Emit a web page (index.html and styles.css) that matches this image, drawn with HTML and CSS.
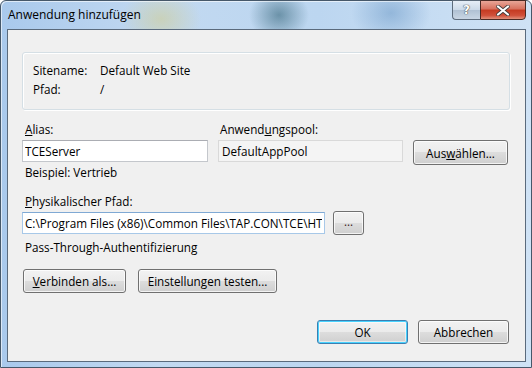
FILE: index.html
```html
<!DOCTYPE html>
<html lang="de">
<head>
  <meta charset="UTF-8">
  <link rel="stylesheet" href="styles.css">
  <title>Anwendung hinzufügen</title>
</head>
<body>
<div class="window">
  <div class="titlebar">
    <span class="title">Anwendung hinzufügen</span>
    <div class="caption-buttons">
      <div class="cap-help">?</div>
      <div class="cap-close">
        <svg width="14" height="11" viewBox="0 0 14 11"><path d="M2 1.5 L12 9.5 M12 1.5 L2 9.5" stroke="#3a3a3a" stroke-width="3.6" stroke-linecap="round"/><path d="M2 1.5 L12 9.5 M12 1.5 L2 9.5" stroke="#ffffff" stroke-width="2.2" stroke-linecap="round"/></svg>
      </div>
    </div>
  </div>
  <div class="client">
    <div class="groupbox">
      <div class="info-row"><span class="info-key">Sitename:</span><span>Default Web Site</span></div>
      <div class="info-row"><span class="info-key">Pfad:</span><span>/</span></div>
    </div>

    <div class="pool-grid">
      <label class="lbl lbl-alias"><u>A</u>lias:</label>
      <label class="lbl lbl-pool">Anwend<u>u</u>ngspool:</label>
      <input class="textbox alias" type="text" value="TCEServer">
      <div class="textbox readonly">DefaultAppPool</div>
      <button class="btn btn-select">Aus<u>w</u>ählen...</button>
    </div>
    <div class="hint">Beispiel: Vertrieb</div>

    <label class="lbl lbl-path"><u>P</u>hysikalischer Pfad:</label>
    <div class="path-row">
      <input class="textbox path" type="text" value="C:\Program Files (x86)\Common Files\TAP.CON\TCE\HTML">
      <button class="btn btn-browse">...</button>
    </div>
    <div class="hint auth">Pass-Through-Authentifizierung</div>

    <div class="action-row">
      <button class="btn btn-connect"><u>V</u>erbinden als...</button>
      <button class="btn btn-test">Einstellun<u>g</u>en testen...</button>
    </div>

    <div class="dialog-buttons">
      <button class="btn btn-ok">OK</button>
      <button class="btn btn-cancel">Abbrechen</button>
    </div>
  </div>
</div>
</body>
</html>
```

FILE: styles.css
```css
* {
  margin: 0;
  padding: 0;
  box-sizing: border-box;
}
body {
  width: 532px;
  height: 368px;
  overflow: hidden;
  background: #ffffff;
  font-family: "Open Sans", "Noto Sans", Arial, sans-serif;
  font-size: 11.7px;
  color: #000000;
}
.window {
  width: 532px;
  height: 368px;
  border: 1px solid #46586a;
  border-radius: 6px 6px 0 0;
  padding: 0 5px 5px 6px;
  background:
    radial-gradient(ellipse 40px 30px at 160px 18px, rgba(210, 200, 120, 0.45), transparent),
    radial-gradient(ellipse 30px 26px at 278px 14px, rgba(40, 90, 110, 0.55), transparent),
    radial-gradient(ellipse 40px 30px at 390px 12px, rgba(90, 140, 190, 0.45), transparent),
    linear-gradient(to right, #a9c9ec, #c2d9f1 30%, #bcd6f0 60%, #cfe2f5);
  box-shadow: inset 1px 1px 0 rgba(255, 255, 255, 0.6);
}
.titlebar {
  height: 28px;
  display: flex;
  align-items: flex-start;
  justify-content: space-between;
}
.title {
  font-size: 12px;
  margin-top: 5px;
  margin-left: 1px;
  color: #000000;
}
.caption-buttons {
  display: flex;
  margin-top: -1px;
}
.cap-help {
  width: 28px;
  height: 20px;
  border: 1px solid #5d6c7c;
  border-right: none;
  border-radius: 0 0 0 4px;
  background: linear-gradient(to bottom, #e6eef7, #cbd9e8 50%, #b0c1d3 51%, #c9d6e4);
  color: #ffffff;
  font-family: "DejaVu Sans", sans-serif;
  font-weight: bold;
  font-size: 12px;
  text-align: center;
  line-height: 18px;
  text-shadow: 0 0 1px #333, 0 0 1px #333;
}
.cap-close {
  width: 46px;
  height: 20px;
  border: 1px solid #4a2a24;
  border-radius: 0 0 4px 0;
  background: linear-gradient(to bottom, #e8a597, #d7705d 45%, #c53a21 50%, #d0503a 80%, #e1907b);
  display: flex;
  align-items: center;
  justify-content: center;
}
.client {
  width: 519px;
  height: 333px;
  border: 1px solid #5a6a7c;
  background: #f0f0f0;
  padding: 22px 0 0 14px;
}
.groupbox {
  width: 488px;
  height: 58px;
  border: 1px solid #d5dfe5;
  border-radius: 3px;
  box-shadow: inset 1px 1px 0 #ffffff, 1px 1px 0 #ffffff;
  padding: 8px 10px;
}
.info-row {
  display: flex;
  line-height: 19px;
}
.info-key {
  width: 67px;
}
.pool-grid {
  display: grid;
  grid-template-columns: 186px 185px 95px;
  column-gap: 10px;
  margin-top: 11px;
}
.pool-grid .textbox,
.pool-grid .btn {
  margin-top: 1px;
}
.lbl {
  display: block;
  line-height: 16px;
  padding-left: 3px;
  margin-bottom: 2px;
}
.lbl-pool {
  padding-left: 2px;
  grid-column: 2 / 4;
}
.textbox {
  height: 22px;
  border: 1px solid #c4c7cc;
  border-top-color: #abadb3;
  background: #ffffff;
  font-family: inherit;
  font-size: inherit;
  color: #000000;
  padding: 0 2px;
  line-height: 20px;
  outline: none;
}
.readonly {
  background: #f4f4f4;
  border-color: #d9d9d9;
  padding-left: 3px;
}
.hint {
  line-height: 16px;
  padding-left: 3px;
  margin-top: -1px;
}
.lbl-path {
  margin-top: 13px;
}
.path-row {
  display: flex;
  align-items: center;
  gap: 8px;
}
.path {
  width: 303px;
  border-color: #a7c8e8;
  border-top-color: #7fa9d4;
}
.auth {
  margin-top: 4px;
}
.btn {
  height: 24px;
  border: 1px solid #707070;
  border-radius: 3px;
  background: linear-gradient(to bottom, #f2f2f2, #ebebeb 49%, #dddddd 50%, #cfcfcf);
  box-shadow: inset 0 0 0 1px rgba(255, 255, 255, 0.75);
  font-family: inherit;
  font-size: inherit;
  color: #000000;
  text-align: center;
}
.btn-select {
  height: 25px;
  margin-top: 0;
}
.btn-browse {
  width: 31px;
  height: 24px;
  color: #3a1a1a;
  padding-bottom: 4px;
}
.action-row {
  display: flex;
  gap: 12px;
  margin-top: 14px;
  padding-left: 1px;
}
.btn-connect {
  width: 103px;
}
.btn-test {
  width: 139px;
}
.dialog-buttons {
  display: flex;
  gap: 10px;
  margin-top: 27px;
  padding-left: 295px;
}
.dialog-buttons .btn {
  width: 91px;
  height: 24px;
}
.btn-ok {
  border-color: #3c7fb1;
  box-shadow: inset 0 0 0 1px #48d2fe, inset 0 0 0 2px rgba(255, 255, 255, 0.5);
}
```
